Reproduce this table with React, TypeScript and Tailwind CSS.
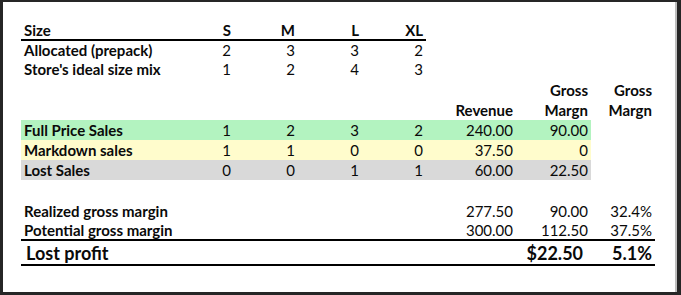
import React from "react";

type Cell = { t?: string; b?: boolean };

const W = [
  "w-[149px]",
  "w-[64px]",
  "w-[64px]",
  "w-[64px]",
  "w-[64px]",
  "w-[90px]",
  "w-[75px]",
  "w-[64px]",
];

function Row({
  cells,
  h,
  bg = "",
  bgCols = 0,
  pb,
  border,
  borderCols = 8,
}: {
  cells: (string | Cell)[];
  h: string;
  bg?: string;
  bgCols?: number;
  pb: string;
  border?: boolean;
  borderCols?: number;
}) {
  return (
    <div className={`flex ${h}`}>
      {W.map((w, i) => {
        const c = cells[i];
        const cell: Cell = typeof c === "string" ? { t: c } : c || {};
        const isLabel = i === 0;
        return (
          <div
            key={i}
            className={`flex items-end ${w} ${pb} ${isLabel ? "justify-start pl-[3px]" : "justify-end pr-[3px]"} ${
              border && i < borderCols ? "border-b-2 border-black" : ""
            } ${i < bgCols ? bg : ""}`}
          >
            <span
              className={`whitespace-nowrap text-[15px] leading-[15px] ${
                isLabel || cell.b ? "font-bold" : "font-normal"
              }`}
            >
              {cell.t ?? ""}
            </span>
          </div>
        );
      })}
    </div>
  );
}

export default function App() {
  return (
    <div className="w-[681px] h-[295px] bg-[#262626] overflow-hidden">
      <div className="ml-[3px] mt-[2px] w-[674px] h-[290px] bg-white border-r-2 border-[#bdbdbd] pl-[18px] pt-[18px] text-[#0a0a0a] font-['Lato','Liberation_Sans',sans-serif]">
        <Row
          h="h-[21px]"
          pb="pb-[1px]"
          border
          borderCols={5}
          cells={["Size", { t: "S", b: true }, { t: "M", b: true }, { t: "L", b: true }, { t: "XL", b: true }]}
        />
        <Row h="h-[19px]" pb="pb-[2px]" cells={["Allocated (prepack)", "2", "3", "3", "2"]} />
        <Row h="h-[20px]" pb="pb-[3px]" cells={["Store's ideal size mix", "1", "2", "4", "3"]} />
        <Row h="h-[20px]" pb="pb-[2px]" cells={["", "", "", "", "", "", { t: "Gross", b: true }, { t: "Gross", b: true }]} />
        <Row
          h="h-[20px]"
          pb="pb-[2px]"
          cells={["", "", "", "", "", { t: "Revenue", b: true }, { t: "Margn", b: true }, { t: "Margn", b: true }]}
        />
        <Row
          h="h-[20px]"
          pb="pb-[2px]"
          bg="bg-[#b3f3c0]"
          bgCols={7}
          cells={["Full Price Sales", "1", "2", "3", "2", "240.00", "90.00"]}
        />
        <Row
          h="h-[20px]"
          pb="pb-[2px]"
          bg="bg-[#fffccc]"
          bgCols={7}
          cells={["Markdown sales", "1", "1", "0", "0", "37.50", "0"]}
        />
        <Row
          h="h-[20px]"
          pb="pb-[2px]"
          bg="bg-[#d9d9d9]"
          bgCols={7}
          cells={["Lost Sales", "0", "0", "1", "1", "60.00", "22.50"]}
        />
        <div className="h-[20px]" />
        <Row h="h-[20px]" pb="pb-[1px]" cells={["Realized gross margin", "", "", "", "", "277.50", "90.00", "32.4%"]} />
        <Row
          h="h-[21px]"
          pb="pb-[1px]"
          border
          cells={["Potential gross margin", "", "", "", "", "300.00", "112.50", "37.5%"]}
        />
        <div className="flex w-[634px] h-[25px] border-b-2 border-black text-[18px] leading-[18px] font-bold">
          <div className="flex items-end w-[516px] pl-[5px] pb-[2px]">
            <span className="whitespace-nowrap">Lost profit</span>
          </div>
          <div className="flex items-end justify-end w-[75px] pr-[10px] pb-[2px]">
            <span className="whitespace-nowrap">$22.50</span>
          </div>
          <div className="flex items-end justify-end w-[64px] pr-[3px] pb-[2px]">
            <span className="whitespace-nowrap">5.1%</span>
          </div>
        </div>
      </div>
    </div>
  );
}
